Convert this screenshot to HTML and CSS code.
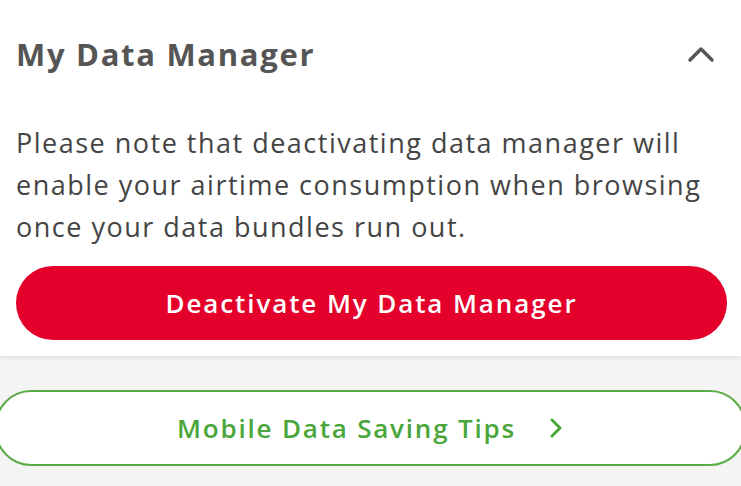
FILE: index.html
```html
<!DOCTYPE html>
<html lang="en">
<head>
  <meta charset="UTF-8">
  <meta name="viewport" content="width=device-width, initial-scale=1.0">
  <title>My Data Manager</title>
  <link rel="stylesheet" href="styles.css">
</head>
<body>
  <div class="card">
    <div class="card-head">
      <h2 class="title">My Data Manager</h2>
      <svg class="caret" width="28" height="18" viewBox="0 0 28 18">
        <path d="M3 15 L14 4 L25 15" fill="none" stroke="#555" stroke-width="3.5" stroke-linecap="round" stroke-linejoin="round"/>
      </svg>
    </div>
    <p class="note">Please note that deactivating data manager will enable your airtime consumption when browsing once your data bundles run out.</p>
    <button class="btn-red">Deactivate My Data Manager</button>
  </div>

  <div class="tips">
    <button class="btn-green">
      <span>Mobile Data Saving Tips</span>
      <svg width="16" height="22" viewBox="0 0 16 22">
        <path d="M4 3 L12 11 L4 19" fill="none" stroke="#4aa63a" stroke-width="3" stroke-linecap="round" stroke-linejoin="round"/>
      </svg>
    </button>
  </div>
</body>
</html>
```

FILE: styles.css
```css
body {
  margin: 0;
  background: #f4f4f4;
  font-family: "Open Sans", "Liberation Sans", sans-serif;
  overflow: hidden;
}

.card {
  background: #fff;
  padding: 0 14px 16px 16px;
  box-shadow: 0 3px 4px rgba(0, 0, 0, 0.06);
}

.card-head {
  display: flex;
  align-items: center;
  justify-content: space-between;
  height: 108px;
  padding-right: 12px;
}

.title {
  margin: 0;
  font-size: 31px;
  font-weight: 700;
  color: #555;
  letter-spacing: 1.7px;
}

.note {
  margin: 14px 0 18px;
  font-size: 27px;
  line-height: 42px;
  color: #444;
  letter-spacing: 1.5px;
}

.btn-red {
  display: block;
  width: 100%;
  height: 74px;
  border: 0;
  border-radius: 37px;
  background: #e4002b;
  color: #fff;
  font-family: inherit;
  font-size: 26px;
  font-weight: 600;
  letter-spacing: 1.9px;
}

.tips {
  padding: 34px 0 0;
  margin: 0 -5px;
}

.btn-green {
  display: flex;
  align-items: center;
  justify-content: center;
  gap: 32px;
  width: 100%;
  height: 76px;
  border: 2px solid #5aab45;
  border-radius: 36px;
  background: #fff;
  color: #4aa63a;
  font-family: inherit;
  font-size: 26px;
  font-weight: 600;
  letter-spacing: 1.8px;
}
```
